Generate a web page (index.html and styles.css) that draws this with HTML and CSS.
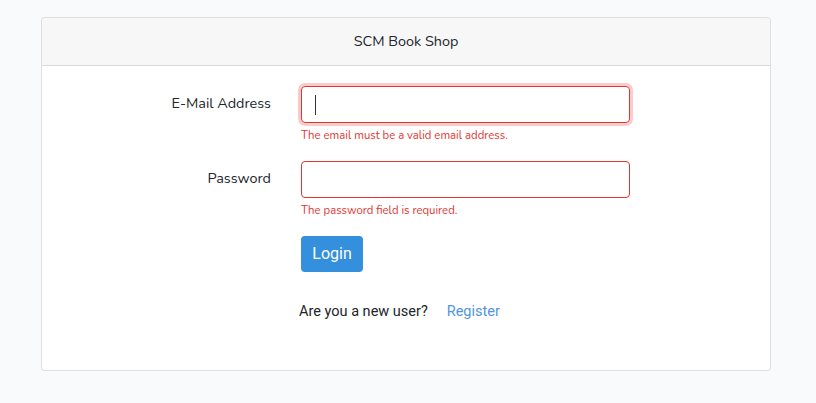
FILE: index.html
```html
<!DOCTYPE html>
<html>
<head>
<meta charset="utf-8">
<link rel="stylesheet" href="styles.css">
</head>
<body>
<div class="card">
  <div class="card-header">SCM Book Shop</div>
  <div class="card-body">
    <div class="form-row">
      <label class="form-label">E-Mail Address</label>
      <div class="field">
        <div class="input focused"><span class="caret"></span></div>
        <div class="feedback">The email must be a valid email address.</div>
      </div>
    </div>
    <div class="form-row">
      <label class="form-label">Password</label>
      <div class="field">
        <div class="input"></div>
        <div class="feedback">The password field is required.</div>
      </div>
    </div>
    <div class="form-row">
      <span></span>
      <div class="field">
        <button class="btn">Login</button>
      </div>
    </div>
    <div class="register-row">
      <span class="question">Are you a new user?</span>
      <a class="register" href="#">Register</a>
    </div>
  </div>
</div>
</body>
</html>
```

FILE: styles.css
```css
html, body {
  margin: 0;
  padding: 0;
  background: #f8fafc;
}
body {
  padding: 17px 0 0 41px;
  font-family: "Nunito", "Lato", "Open Sans", sans-serif;
  font-size: 14.4px;
  color: #212529;
}
.card {
  width: 728px;
  border: 1px solid rgba(0,0,0,.125);
  border-radius: 4px;
  background: #fff;
}
.card-header {
  background: #f7f7f7;
  border-bottom: 1px solid rgba(0,0,0,.125);
  height: 47px;
  line-height: 47px;
  text-align: center;
  font-size: 14.4px;
  border-radius: 4px 4px 0 0;
  font-family: "Nunito", "Lato", sans-serif;
}
.card-body {
  padding: 20px 20px 20px 20px;
  height: 264px;
}
.form-row {
  display: grid;
  grid-template-columns: 209px 329px;
  column-gap: 30px;
  margin-bottom: 16px;
}
.form-label {
  text-align: right;
  padding-top: 6px;
  line-height: 23px;
  font-size: 14.4px;
}
.input {
  height: 35px;
  border: 1px solid #e3342f;
  border-radius: 4px;
  box-sizing: content-box;
  position: relative;
}
.input.focused {
  box-shadow: 0 0 0 3px rgba(227,52,47,.25);
}
.caret {
  position: absolute;
  left: 13px;
  top: 8px;
  width: 1px;
  height: 20px;
  background: #333;
}
.feedback {
  margin-top: 4px;
  font-size: 11.35px;
  line-height: 18px;
  color: #e3342f;
}
.btn {
  display: block;
  height: 36px;
  width: 62px;
  padding: 0;
  border: 0;
  border-radius: 4px;
  background: #3490dc;
  color: #fff;
  font-family: "Roboto", "Liberation Sans", sans-serif;
  font-size: 16px;
  line-height: 36px;
}
.register-row {
  display: flex;
  align-items: center;
  margin: 29px 0 0 237px;
  font-family: "Roboto", "Liberation Sans", sans-serif;
  font-size: 14.5px;
  line-height: 22px;
}
.question {
  color: #212529;
}
.register {
  margin-left: 19px;
  color: #4f95e0;
  text-decoration: none;
}
```
